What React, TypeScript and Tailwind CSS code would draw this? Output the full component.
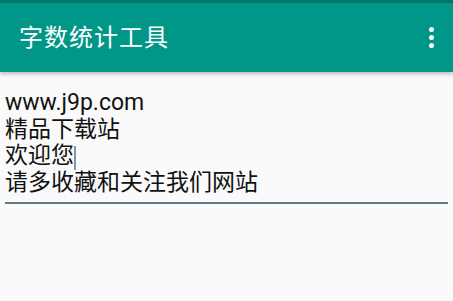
export default function App() {
  return (
    <div
      className="w-[453px] h-[301px] bg-[#fafafa] overflow-hidden"
      style={{ fontFamily: 'Roboto, "Noto Sans CJK SC", sans-serif' }}
    >
      <div className="h-[3px] bg-[#00796b]" />
      <div className="h-[69px] bg-[#009688] flex items-center justify-between pl-[19px] pr-[19px] shadow-[0_2px_4px_rgba(0,0,0,0.25)] relative">
        <span className="text-white text-[24px] leading-none tracking-[1px]">字数统计工具</span>
        <div className="flex flex-col gap-[3px] items-center">
          <span className="w-[5px] h-[5px] rounded-full bg-white" />
          <span className="w-[5px] h-[5px] rounded-full bg-white" />
          <span className="w-[5px] h-[5px] rounded-full bg-white" />
        </div>
      </div>
      <div className="pt-[18px] px-[5px]">
        <div className="text-[23px] leading-[26.5px] text-[#111] pb-[6px] border-b-2 border-[#5f7b8a]">
          <div>www.j9p.com</div>
          <div>精品下载站</div>
          <div className="flex items-center">
            欢迎您
            <span className="inline-block w-[2px] h-[24px] bg-[#7d98a8] relative top-[2px]" />
          </div>
          <div>请多收藏和关注我们网站</div>
        </div>
      </div>
    </div>
  );
}
